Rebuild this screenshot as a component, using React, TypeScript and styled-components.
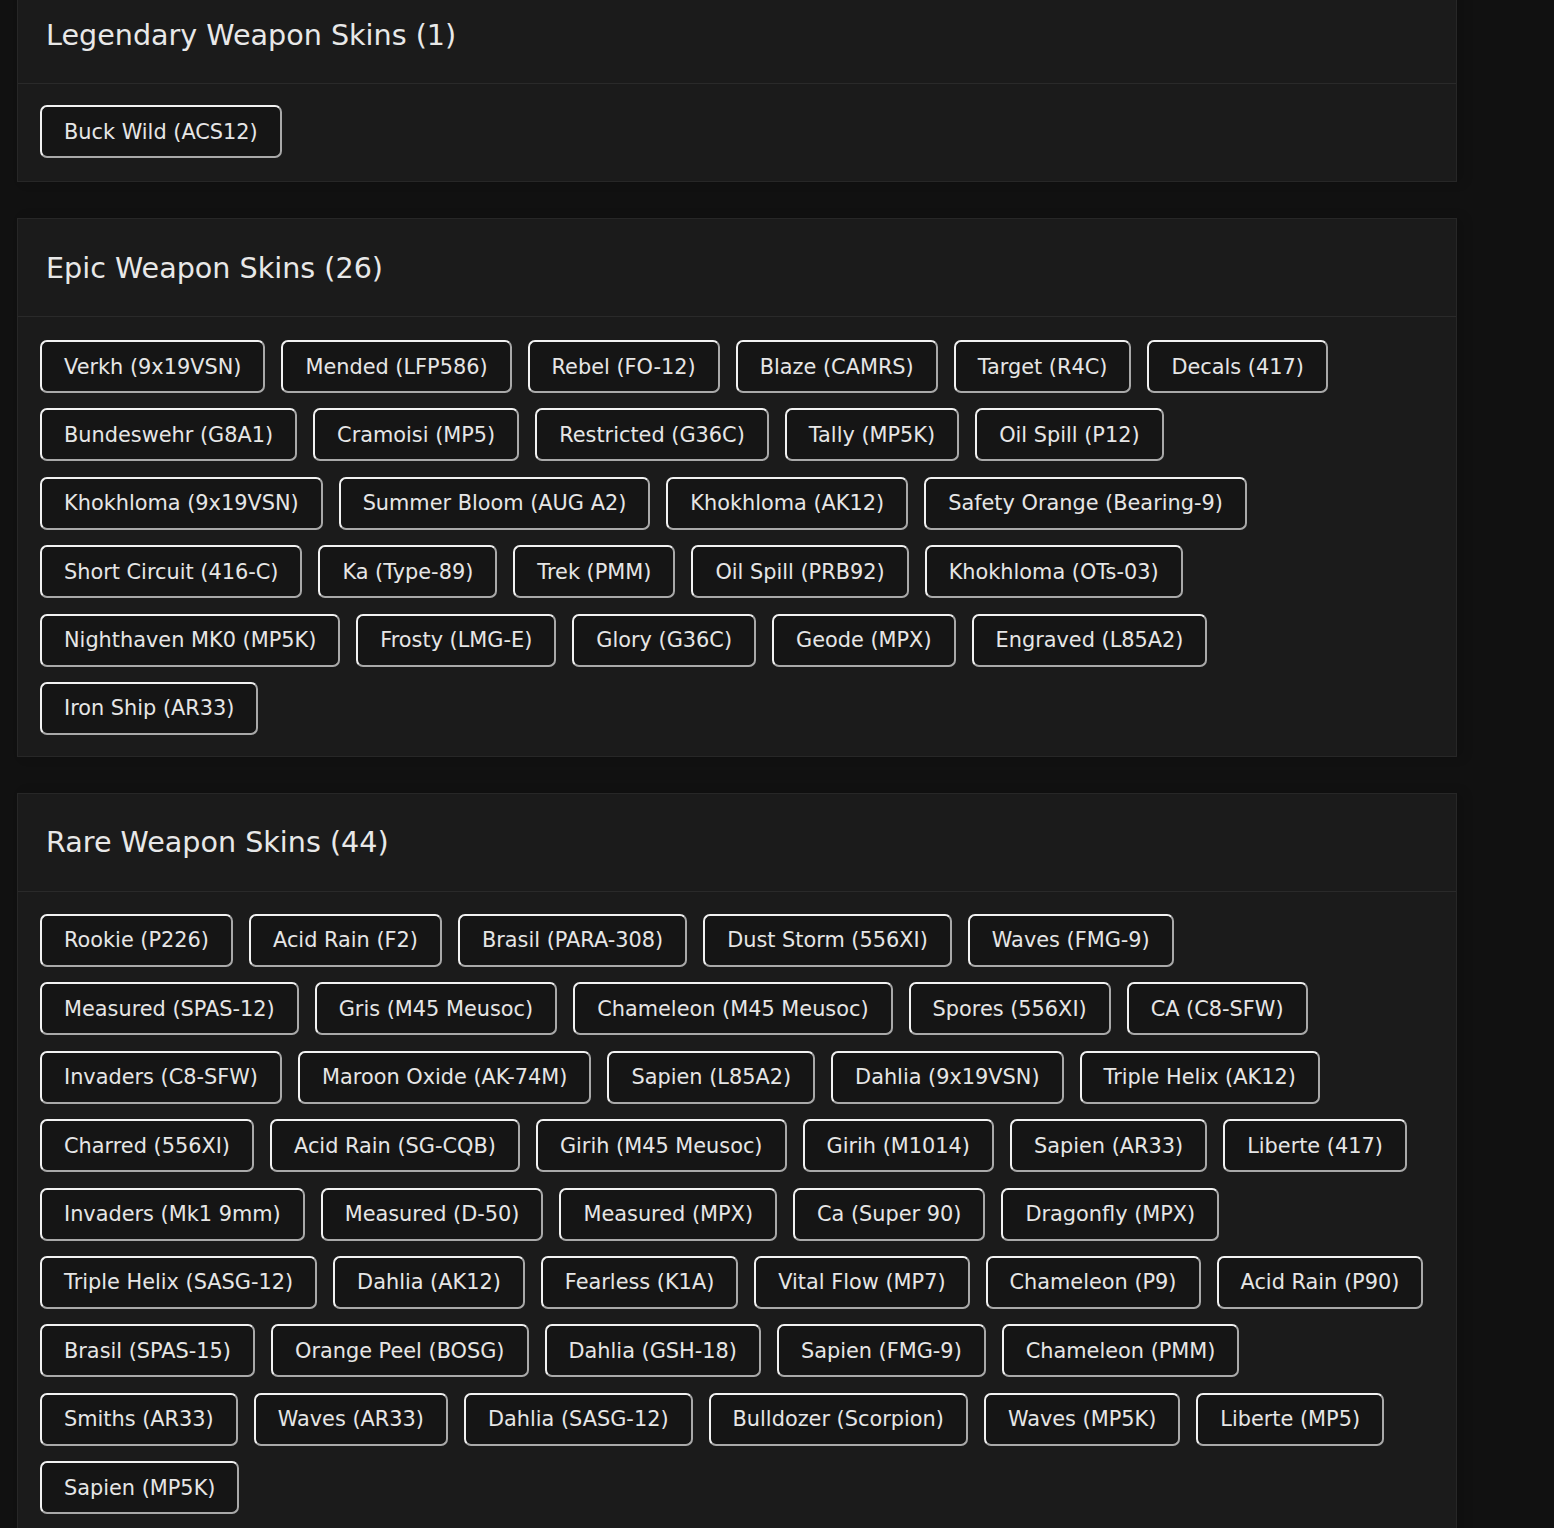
import React from "react";
import styled, { createGlobalStyle } from "styled-components";

const GlobalStyle = createGlobalStyle`
  html, body {
    margin: 0;
    padding: 0;
    background: #111111;
  }
  body {
    font-family: "DejaVu Sans", "Liberation Sans", sans-serif;
    color: #e8e8e8;
  }
`;

const Page = styled.div`
  width: 1554px;
  height: 1528px;
  overflow: hidden;
  background: #111111;
`;

const Column = styled.div`
  display: flex;
  flex-direction: column;
  gap: 36px;
  width: 1440px;
  margin: -15px 0 0 17px;
`;

const Card = styled.section`
  background: #1b1b1b;
  border: 1px solid #272727;
  box-shadow: 6px 0 10px rgba(0, 0, 0, 0.15);
`;

const CardHeader = styled.header`
  height: 98px;
  box-sizing: border-box;
  padding: 0 28px;
  display: flex;
  align-items: center;
  border-bottom: 1px solid #2a2a2a;
`;

const Title = styled.h2`
  margin: 0;
  font-size: 28.6px;
  font-weight: 500;
  color: #e8e8e8;
  letter-spacing: 0;
`;

const CardBody = styled.div<{ $top: number; $bottom: number }>`
  padding: ${(p) => p.$top}px 22px ${(p) => p.$bottom}px 22px;
  display: flex;
  flex-direction: column;
  gap: 15.4px;
`;

const ChipRow = styled.div`
  display: flex;
  gap: 16px;
`;

const Chip = styled.button`
  height: 53px;
  box-sizing: border-box;
  padding: 0 22px;
  display: inline-flex;
  align-items: center;
  background: #151515;
  color: #e6e6e6;
  font-family: "DejaVu Sans", "Liberation Sans", sans-serif;
  font-size: 20.85px;
  white-space: nowrap;
  border: 2px solid;
  border-color: #f2f2f2 #a9a9a9 #a9a9a9 #f2f2f2;
  border-radius: 7px;
  cursor: pointer;
`;

type Section = { title: string; top: number; bottom: number; rows: string[][] };

const sections: Section[] = [
  {
    title: "Legendary Weapon Skins (1)",
    top: 21,
    bottom: 23,
    rows: [["Buck Wild (ACS12)"]],
  },
  {
    title: "Epic Weapon Skins (26)",
    top: 23,
    bottom: 21,
    rows: [
      ["Verkh (9x19VSN)", "Mended (LFP586)", "Rebel (FO-12)", "Blaze (CAMRS)", "Target (R4C)", "Decals (417)"],
      ["Bundeswehr (G8A1)", "Cramoisi (MP5)", "Restricted (G36C)", "Tally (MP5K)", "Oil Spill (P12)"],
      ["Khokhloma (9x19VSN)", "Summer Bloom (AUG A2)", "Khokhloma (AK12)", "Safety Orange (Bearing-9)"],
      ["Short Circuit (416-C)", "Ka (Type-89)", "Trek (PMM)", "Oil Spill (PRB92)", "Khokhloma (OTs-03)"],
      ["Nighthaven MK0 (MP5K)", "Frosty (LMG-E)", "Glory (G36C)", "Geode (MPX)", "Engraved (L85A2)"],
      ["Iron Ship (AR33)"],
    ],
  },
  {
    title: "Rare Weapon Skins (44)",
    top: 22,
    bottom: 21,
    rows: [
      ["Rookie (P226)", "Acid Rain (F2)", "Brasil (PARA-308)", "Dust Storm (556XI)", "Waves (FMG-9)"],
      ["Measured (SPAS-12)", "Gris (M45 Meusoc)", "Chameleon (M45 Meusoc)", "Spores (556XI)", "CA (C8-SFW)"],
      ["Invaders (C8-SFW)", "Maroon Oxide (AK-74M)", "Sapien (L85A2)", "Dahlia (9x19VSN)", "Triple Helix (AK12)"],
      ["Charred (556XI)", "Acid Rain (SG-CQB)", "Girih (M45 Meusoc)", "Girih (M1014)", "Sapien (AR33)", "Liberte (417)"],
      ["Invaders (Mk1 9mm)", "Measured (D-50)", "Measured (MPX)", "Ca (Super 90)", "Dragonfly (MPX)"],
      ["Triple Helix (SASG-12)", "Dahlia (AK12)", "Fearless (K1A)", "Vital Flow (MP7)", "Chameleon (P9)", "Acid Rain (P90)"],
      ["Brasil (SPAS-15)", "Orange Peel (BOSG)", "Dahlia (GSH-18)", "Sapien (FMG-9)", "Chameleon (PMM)"],
      ["Smiths (AR33)", "Waves (AR33)", "Dahlia (SASG-12)", "Bulldozer (Scorpion)", "Waves (MP5K)", "Liberte (MP5)"],
      ["Sapien (MP5K)"],
    ],
  },
];

export default function App() {
  return (
    <Page>
      <GlobalStyle />
      <Column>
        {sections.map((s) => (
          <Card key={s.title}>
            <CardHeader>
              <Title>{s.title}</Title>
            </CardHeader>
            <CardBody $top={s.top} $bottom={s.bottom}>
              {s.rows.map((row, i) => (
                <ChipRow key={i}>
                  {row.map((name) => (
                    <Chip key={name}>{name}</Chip>
                  ))}
                </ChipRow>
              ))}
            </CardBody>
          </Card>
        ))}
      </Column>
    </Page>
  );
}
